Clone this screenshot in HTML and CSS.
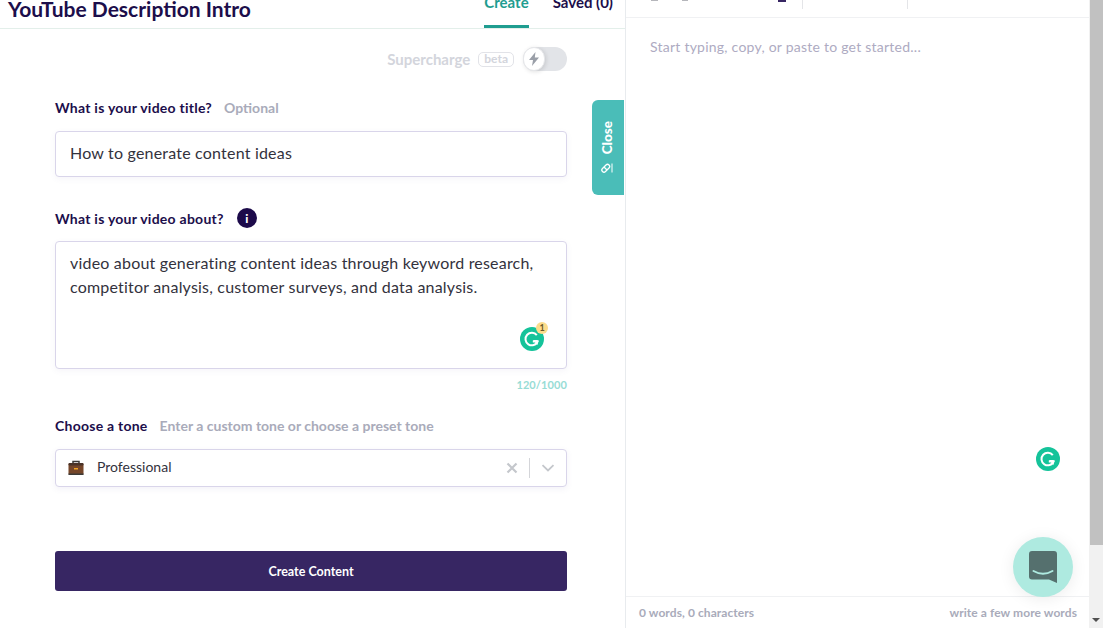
FILE: index.html
```html
<!DOCTYPE html>
<html lang="en">
<head>
  <meta charset="UTF-8" />
  <meta name="viewport" content="width=device-width, initial-scale=1.0" />
  <title>YouTube Description Intro</title>
  <link rel="stylesheet" href="styles.css">
</head>
<body>
  <div class="app">
    <!-- Left: form -->
    <div class="left-panel">
      <div class="top-bar">
        <h1 class="page-title">YouTube Description Intro</h1>
        <div class="tabs">
          <div class="tab tab-active">Create</div>
          <div class="tab">Saved (0)</div>
        </div>
      </div>

      <div class="form">
        <div class="supercharge">
          <span class="supercharge-label">Supercharge</span>
          <span class="beta">beta</span>
          <div class="toggle">
            <div class="toggle-knob">
              <svg width="12" height="14" viewBox="0 0 12 14"><path d="M7.5 0 1 8h4l-1 6 7-8.500H6.800z" fill="#9a9fa8"/></svg>
            </div>
          </div>
        </div>

        <div class="label-row label-title">
          <span class="label">What is your video title?</span>
          <span class="hint">Optional</span>
        </div>
        <div class="text-box title-box">How to generate content ideas</div>

        <div class="label-row label-about">
          <span class="label">What is your video about?</span>
          <span class="info">i</span>
        </div>
        <div class="text-box about-box">
          video about generating content ideas through keyword research, competitor analysis, customer surveys, and data analysis.
          <div class="g-badge">
            <svg width="24" height="24" viewBox="0 0 24 24"><circle cx="12" cy="12" r="12" fill="#15c39a"/><path d="M16.800 8.200A6.300 6.300 0 1 0 17.600 14.500H12.800" fill="none" stroke="#fff" stroke-width="2"/><path d="M17.800 18v-5h-5z" fill="#fff"/></svg>
            <span class="g-count">1</span>
          </div>
        </div>
        <div class="counter">120/1000</div>

        <div class="label-row label-tone">
          <span class="label">Choose a tone</span>
          <span class="hint">Enter a custom tone or choose a preset tone</span>
        </div>
        <div class="select-box">
          <svg class="case-icon" width="16" height="16" viewBox="0 0 16 16">
            <path d="M5 3V1.500h6V3" fill="none" stroke="#3c3a38" stroke-width="1.500"/>
            <rect x="0.500" y="3" width="15" height="12" rx="1.500" fill="#75462a"/>
            <rect x="0.500" y="3" width="15" height="2.500" rx="1" fill="#4a3328"/>
            <rect x="0.500" y="13.500" width="15" height="1.500" fill="#3c3a38"/>
            <rect x="6" y="8" width="4" height="1.500" fill="#f5a623"/>
          </svg>
          <span class="select-value">Professional</span>
          <svg class="clear-icon" width="12" height="12" viewBox="0 0 12 12"><path d="M1.500 1.500l9 9m0-9l-9 9" stroke="#c4c7cc" stroke-width="2.200"/></svg>
          <span class="select-sep"></span>
          <svg class="chevron-icon" width="14" height="8" viewBox="0 0 14 8"><path d="M1.500 1.200 7 6.400l5.500-5.200" fill="none" stroke="#c4c7cc" stroke-width="1.800"/></svg>
        </div>

        <button class="create-btn">Create Content</button>
      </div>

      <!-- Close tab -->
      <div class="close-tab">
        <span class="close-text">Close</span>
        <svg width="12" height="12" viewBox="0 0 12 12"><path d="M1.500 6.500 5 3a1.800 1.800 0 0 1 3 3l-3.500 3.500a1.800 1.800 0 0 1-3-3z" fill="none" stroke="#fff" stroke-width="1.300"/><path d="M3 5l3 3" stroke="#fff" stroke-width="1.300"/><path d="M11 1.500v9" stroke="#fff" stroke-width="1"/></svg>
      </div>
    </div>

    <!-- Right: editor -->
    <div class="right-panel">
      <div class="toolbar">
        <span class="tool-dot"></span>
        <span class="tool-dot tool-dot-2"></span>
        <span class="tool-mark"></span>
        <span class="tool-sep"></span>
        <span class="tool-sep tool-sep-2"></span>
      </div>
      <div class="editor">
        <p class="placeholder">Start typing, copy, or paste to get started...</p>
        <svg class="g-float" width="24" height="24" viewBox="0 0 24 24"><circle cx="12" cy="12" r="12" fill="#15c39a"/><path d="M16.800 8.200A6.300 6.300 0 1 0 17.600 14.500H12.800" fill="none" stroke="#fff" stroke-width="2"/><path d="M17.800 18v-5h-5z" fill="#fff"/></svg>
      </div>
      <div class="editor-footer">
        <span>0 words, 0 characters</span>
        <span>write a few more words</span>
      </div>
      <div class="chat-bubble">
        <svg width="28" height="32" viewBox="0 0 28 32"><path d="M3 0h22a3 3 0 0 1 3 3v29l-8-3.500H3a3 3 0 0 1-3-3V3a3 3 0 0 1 3-3z" fill="#55706e"/><path d="M4.500 20c6 3.500 13 3.500 19 0" fill="none" stroke="#aeeae0" stroke-width="2" stroke-linecap="round"/></svg>
      </div>
    </div>

    <!-- Scrollbar -->
    <div class="scrollbar">
      <div class="scroll-thumb"></div>
      <div class="scroll-arrow"></div>
    </div>
  </div>
</body>
</html>
```

FILE: styles.css
```css
html, body {
  height: 100%;
}

body {
  margin: 0;
  padding: 0;
  overflow: hidden;
  background-color: #fff;
  font-family: Lato, Arial, sans-serif;
  color: #1c0e4b;
}

.app {
  display: flex;
  height: 628px;
}

/* Left Panel */
.left-panel {
  position: relative;
  flex: none;
  width: 625px;
  border-right: 1px solid #e8ebee;
}

.top-bar {
  display: flex;
  justify-content: space-between;
  height: 28px;
  border-bottom: 1px solid #e3efea;
  overflow: hidden;
}

.page-title {
  margin: 0 0 0 8px;
  font-size: 21px;
  line-height: 18px;
  font-weight: 700;
  color: #1c0e4b;
}

.tabs {
  display: flex;
  gap: 24px;
  margin-right: 12px;
  align-items: flex-start;
}

.tab {
  margin-top: -7px;
  font-size: 15px;
  line-height: 18px;
  font-weight: 700;
}

.tab-active {
  height: 32px;
  color: #1f9d90;
  border-bottom: 3px solid #1f9d90;
}

/* Form */
.form {
  display: flex;
  flex-direction: column;
  width: 512px;
  margin-left: 55px;
}

.supercharge {
  display: flex;
  align-items: center;
  justify-content: flex-end;
  height: 24px;
  margin-top: 18px;
  color: #d3d5dc;
}

.supercharge-label {
  margin-top: -1px;
  font-size: 15px;
  font-weight: 700;
}

.beta {
  margin-left: 8px;
  padding: 0 5px;
  height: 13px;
  line-height: 12px;
  font-size: 12px;
  font-weight: 700;
  border: 1px solid #e2e3e8;
  border-radius: 5px;
}

.toggle {
  margin-left: 9px;
  width: 44px;
  height: 24px;
  background-color: #e2e4e8;
  border-radius: 12px;
}

.toggle-knob {
  display: flex;
  align-items: center;
  justify-content: center;
  width: 22px;
  height: 24px;
  background-color: #fff;
  border: 1px solid #e6e7ea;
  box-sizing: border-box;
  border-radius: 12px;
  box-shadow: 1px 1px 4px rgba(0, 0, 0, 0.12);
}

.label-row {
  display: flex;
  align-items: center;
  height: 20px;
}

.label-title {
  margin-top: 26px;
}

.label-about {
  margin-top: 31px;
}

.label-tone {
  margin-top: 22px;
}

.label {
  font-size: 14px;
  letter-spacing: 0.25px;
  font-weight: 700;
  color: #1c0e4b;
}

.hint {
  margin-left: 12px;
  font-size: 14px;
  font-weight: 700;
  color: #a9abba;
}

.info {
  display: flex;
  align-items: center;
  justify-content: center;
  width: 20px;
  height: 20px;
  margin-left: 13px;
  background-color: #1c0a4a;
  border-radius: 50%;
  color: #fff;
  font-size: 12px;
  font-weight: 900;
}

.text-box {
  box-sizing: border-box;
  background-color: #fff;
  border: 1px solid #d9d5ea;
  border-radius: 4px;
  box-shadow: 0 2px 6px rgba(100, 90, 160, 0.06);
  padding: 9px 14px;
  font-size: 16px;
  letter-spacing: 0.2px;
  line-height: 24px;
  color: #33323d;
}

.title-box {
  height: 46px;
  margin-top: 14px;
}

.about-box {
  position: relative;
  height: 128px;
  margin-top: 13px;
}

.g-badge {
  position: absolute;
  right: 22px;
  bottom: 17px;
  width: 24px;
  height: 24px;
}

.g-count {
  position: absolute;
  top: -5px;
  right: -4px;
  width: 12px;
  height: 12px;
  line-height: 12px;
  text-align: center;
  background-color: #fcdc8c;
  border-radius: 50%;
  font-size: 9px;
  letter-spacing: 0;
  font-weight: 700;
  color: #6b5a2a;
}

.counter {
  height: 16px;
  margin-top: 8px;
  text-align: right;
  font-size: 11px;
  letter-spacing: 0.1px;
  line-height: 16px;
  font-weight: 700;
  color: #97dcd5;
}

.select-box {
  display: flex;
  align-items: center;
  box-sizing: border-box;
  height: 38px;
  margin-top: 14px;
  padding: 0 11px 0 12px;
  background-color: #fff;
  border: 1px solid #d9d5ea;
  border-radius: 4px;
  box-shadow: 0 2px 6px rgba(100, 90, 160, 0.08);
}

.select-value {
  flex: 1;
  margin: -4px 0 0 13px;
  font-size: 14px;
  color: #33323d;
}

.select-sep {
  width: 1px;
  height: 20px;
  margin: 0 11px;
  background-color: #d4d5d9;
}

.create-btn {
  height: 40px;
  margin-top: 64px;
  padding: 0;
  background-color: #372663;
  border: none;
  border-radius: 3px;
  color: #fff;
  font-family: inherit;
  font-size: 12.5px;
  font-weight: 700;
  cursor: pointer;
}

/* Close Tab */
.close-tab {
  position: absolute;
  top: 100px;
  right: 1px;
  display: flex;
  flex-direction: column;
  align-items: center;
  justify-content: center;
  gap: 7px;
  width: 32px;
  height: 95px;
  padding-right: 2px;
  box-sizing: border-box;
  background-color: #4abdb8;
  border-radius: 6px 0 0 6px;
  color: #fff;
}

.close-text {
  writing-mode: vertical-rl;
  transform: rotate(180deg);
  font-size: 13.5px;
  font-weight: 900;
}

/* Right Panel */
.right-panel {
  position: relative;
  display: flex;
  flex-direction: column;
  flex: 1;
}

.toolbar {
  position: relative;
  flex: none;
  height: 17px;
  border-bottom: 1px solid #f0f1f3;
}

.tool-dot {
  position: absolute;
  top: 0;
  left: 25px;
  width: 7px;
  height: 1px;
  background-color: #b5b6bb;
}

.tool-dot-2 {
  left: 56px;
  width: 6px;
}

.tool-mark {
  position: absolute;
  top: 0;
  left: 152px;
  width: 8px;
  height: 2px;
  background-color: #372663;
}

.tool-sep {
  position: absolute;
  top: 0;
  left: 176px;
  width: 1px;
  height: 9px;
  background-color: #e4e5e8;
}

.tool-sep-2 {
  left: 281px;
}

.editor {
  position: relative;
  flex: 1;
  padding: 0 24px;
}

.placeholder {
  margin: 19px 0 0;
  font-size: 14px;
  letter-spacing: 0.24px;
  line-height: 20px;
  color: #aeabc2;
}

.g-float {
  position: absolute;
  top: 429px;
  right: 29px;
}

.editor-footer {
  display: flex;
  flex: none;
  justify-content: space-between;
  height: 31px;
  padding: 0 12px 0 13px;
  border-top: 1px solid #f0f1f3;
  font-size: 12px;
  letter-spacing: 0.08px;
  line-height: 31px;
  font-weight: 700;
  color: #a9abba;
}

.chat-bubble {
  position: absolute;
  top: 537px;
  right: 16px;
  display: flex;
  align-items: center;
  justify-content: center;
  width: 60px;
  height: 60px;
  background-color: #aeeae0;
  border-radius: 50%;
  box-shadow: 0 2px 16px rgba(0, 0, 0, 0.08);
}

/* Scrollbar */
.scrollbar {
  position: relative;
  flex: none;
  width: 14px;
  background-color: #f1f1f1;
}

.scroll-thumb {
  width: 13px;
  margin-left: 1px;
  height: 545px;
  background-color: #c1c1c1;
}

.scroll-arrow {
  position: absolute;
  left: 3px;
  bottom: 6px;
  border-left: 4px solid transparent;
  border-right: 4px solid transparent;
  border-top: 4px solid #505050;
}
```
